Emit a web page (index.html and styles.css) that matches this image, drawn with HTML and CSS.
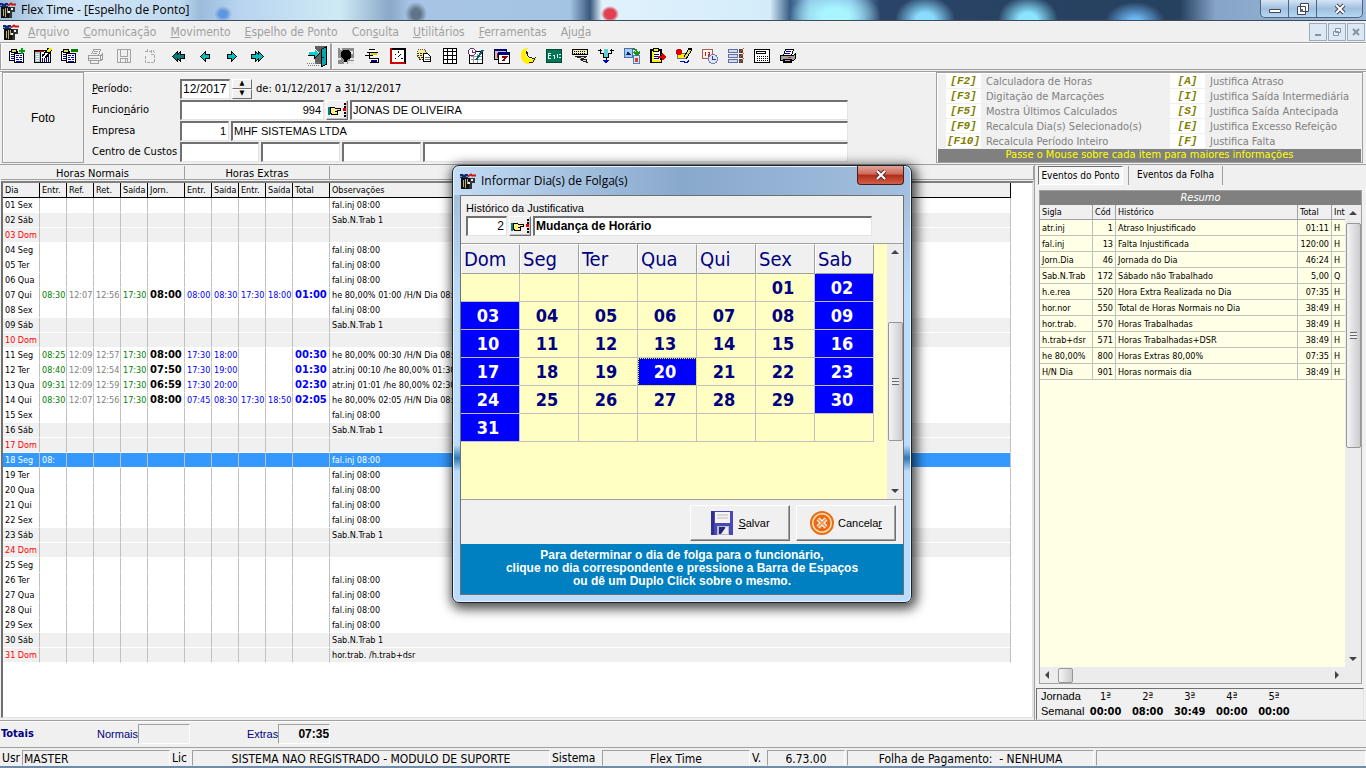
FILE: index.html
```html
<!DOCTYPE html>
<html lang="pt-BR">
<head>
  <meta charset="UTF-8" />
  <title>Flex Time - [Espelho de Ponto]</title>
  <link rel="stylesheet" href="styles.css">
</head>
<body>
  <!-- icons -->
  <svg class="sprite" xmlns="http://www.w3.org/2000/svg">
    <symbol id="i-app" viewBox="0 0 16 16"><path d="M0 1h8v4H0z" fill="#112a6b"/><path d="M0 3.500h2M3 1.500h2M6 3.500h2" stroke="#6f93d8"/><path d="M8 3.500l3-2 1 1h4" stroke="#d01818" fill="none" stroke-width="2"/><path d="M1 5h9v11H1z" fill="#111"/><path d="M3.500 7v7M5.500 6v9M7.500 6v5" stroke="#b8b070"/><path d="M10 5h5v5h-3v6h-3z" fill="#333"/><path d="M11 6h2v2h-2zM8 9h2v2H8z" fill="#eee"/></symbol>
    <symbol id="i-new" viewBox="0 0 17 16"><path d="M.500 3.500h8v9h-8z" fill="#fff" stroke="#000"/><path d="M3 1h5v3H3z" fill="#d8d878" stroke="#000"/><path d="M5.500 5.500h9v9h-9z" fill="#fff" stroke="#000"/><path d="M2 6.500h3M2 8.500h3M2 10.500h3M7 7.500h3M11 7.500h2M7 9.500h2M10 9.500h3M7 11.500h3M11 11.500h2M7 13.500h6" stroke="#0000b0"/><path d="M13 0v6M10 3h6" stroke="#00a000" stroke-width="2"/></symbol>
    <symbol id="i-edit" viewBox="0 0 18 16"><path d="M.500 2.500h16v12H.500z" fill="#fff" stroke="#000"/><path d="M1 3h5v11H1z" fill="#a8c8c8"/><path d="M6.500 3v11" stroke="#000"/><path d="M1 3.500h9" stroke="#c00000"/><path d="M2 6.500h3M2 8.500h3M2 10.500h3M2 12.500h3" stroke="#fff"/><path d="M8.500 6v8M10.500 6v8M12.500 8v6M14.500 6v8" stroke="#000080"/><path d="M17 0l-7 9" stroke="#000" stroke-width="5"/><path d="M17 0l-3 4" stroke="#f4f000" stroke-width="3"/><path d="M13 5l-4 5" stroke="#fff" stroke-width="2"/></symbol>
    <symbol id="i-del" viewBox="0 0 17 16"><path d="M.500 3.500h8v9h-8z" fill="#fff" stroke="#000"/><path d="M3 1h5v3H3z" fill="#d8d878" stroke="#000"/><path d="M5.500 5.500h9v9h-9z" fill="#fff" stroke="#000"/><path d="M2 6.500h3M2 8.500h3M2 10.500h3M7 7.500h3M11 7.500h2M7 9.500h2M10 9.500h3M7 11.500h3M11 11.500h2M7 13.500h6" stroke="#0000b0"/><path d="M10 1h7v3h-7z" fill="#008000"/></symbol>
    <symbol id="i-print-off" viewBox="0 0 16 16"><g fill="none" stroke="#9c9c9c"><path d="M4.500 6.500l2-5h7l-2 6M7 3.500h4M6 5.500h4M1.500 7.500h12v5h-12zM13.500 8l2-2v5l-2 2M2 10.500h10M3.500 13v2h8v-2"/></g></symbol>
    <symbol id="i-save-off" viewBox="0 0 16 16"><g fill="none" stroke="#a4a4a4"><path d="M1.500 1.500h13v13h-13zM4.500 2v6h7V2M4.500 14v-4h7v4M9.500 11v3"/></g></symbol>
    <symbol id="i-undo-off" viewBox="0 0 16 16"><g fill="none" stroke="#a8a8a8"><path d="M3.500 8v6.500h9V6.500h-3v-4h2l1 3M5.500 1v4M3 3.500h6" stroke-dasharray="3 1"/></g></symbol>
    <symbol id="i-first" viewBox="0 0 16 16"><path d="M1.500 8.500l5-5v3l3-3v3h4v4h-4v3l-3-3v3z" fill="#008080" stroke="#000"/></symbol>
    <symbol id="i-prev" viewBox="0 0 16 16"><path d="M3.500 8.500l5-5v3h4v4h-4v3z" fill="#00c0c0" stroke="#000"/></symbol>
    <symbol id="i-next" viewBox="0 0 16 16"><path d="M13.500 8.500l-5-5v3h-4v4h4v3z" fill="#00c0c0" stroke="#000"/></symbol>
    <symbol id="i-last" viewBox="0 0 16 16"><path d="M14.500 8.500l-5-5v3l-3-3v3h-4v4h4v3l3-3v3z" fill="#00c0c0" stroke="#000"/></symbol>
    <symbol id="i-exit" viewBox="0 0 22 22"><path d="M8 1h11v18H8z" fill="#606060"/><path d="M0 18.500h9M1 20.500h12M9 17.500h4" stroke="#808080" stroke-dasharray="1 1"/><path d="M14.500 4.500l5-3v18l-5 2z" fill="#00a8b0" stroke="#000"/><path d="M15 12.500h2" stroke="#000"/><path d="M1.500 6.500h6v-3l5 5-5 5v-3h-6z" fill="#00d0d0" stroke="#fff"/><path d="M1 10.500h6.500v3l5-5" fill="none" stroke="#000"/></symbol>
    <symbol id="i-face" viewBox="0 0 16 16"><path d="M0 0h16v16H0z" fill="#8c8c8c"/><path d="M2 0h2v2H2zM12 3h3v3h-3zM0 10h3v2H0zM12 10h4v2h-4zM10 13h6v3h-6zM6 14h3v2H6z" fill="#e6e6e6"/><path d="M5 2h6l2 3v5l-3 1-1 3H6v-3L3 9V5z" fill="#000"/></symbol>
    <symbol id="i-tree" viewBox="0 0 16 16"><path d="M5 1h7v3H5zM2 6h9v2H2zM6 10h8v4H6z" fill="#fff"/><path d="M5 1.500h6M3 4.500h11M1 7.500h8M5 10.500h9M6 14.500h9M14.500 10v4M5.500 5v6" stroke="#000"/><path d="M7 5h6v2H7z" fill="#d8d000"/><path d="M7 12.500h6" stroke="#000080" stroke-width="2"/></symbol>
    <symbol id="i-clock" viewBox="0 0 14 14"><path d="M1 1h12v12H1z" fill="#fff" stroke="#000" stroke-width="2"/><path d="M1 0v13h12" fill="none" stroke="#d00000" stroke-width="2"/><path d="M7.500 3v1M4.500 5v1M4.500 9v1M10.500 9v1M7 8l3-3" stroke="#000"/></symbol>
    <symbol id="i-docs" viewBox="0 0 16 16"><path d="M2 2l6-1 3 4-5 8-5-5z" fill="#f4ec90" stroke="#555" stroke-dasharray="1 1"/><path d="M1 5.500h6M1 7.500h6M2 9.500h5M3 11.500h4" stroke="#333" stroke-dasharray="2 1"/><path d="M7.500 5.500h4l3 3v5h-7z" fill="#fff" stroke="#000"/><path d="M9 9.500h5M9 11.500h5" stroke="#777"/></symbol>
    <symbol id="i-grid" viewBox="0 0 14 16"><path d="M.500.500h13v15H.500zM4.500 0v16M9.500 0v16M0 3.500h14M0 7.500h14M0 11.500h14" fill="#fff" stroke="#000"/></symbol>
    <symbol id="i-plan" viewBox="0 0 16 16"><path d="M1.500 3.500h13v12h-13z" fill="#fff" stroke="#000"/><path d="M3 8.500h11M3 11.500h11M5.500 6v9M9.500 6v9" stroke="#999"/><circle cx="4" cy="4" r="3.500" fill="#fff" stroke="#603070"/><path d="M4.500 2v2.500h2" stroke="#603070" fill="none"/><path d="M15 2L8 12" stroke="#006070" fill="none" stroke-width="2"/></symbol>
    <symbol id="i-cal" viewBox="0 0 16 16"><path d="M.500 1.500h12v10H.500z" fill="#c0c0d8" stroke="#000"/><path d="M1 1h12v2H1z" fill="#000080"/><path d="M3.500 5v5" stroke="#c00000"/><path d="M4.500 4.500h11v11h-11z" fill="#fff" stroke="#000"/><path d="M5 4h10v3H5z" fill="#000080"/><path d="M8 9h4l-3 4" stroke="#900000" fill="none" stroke-width="2"/></symbol>
    <symbol id="i-moon" viewBox="0 0 16 16"><path d="M6 0C-1 2-1 12 5 15c4 2 9 0 11-4-4 1-8 0-9-3C5 5 6 2 8 0z" fill="#fff000"/><path d="M7 3c-1 5 3 8 8 7l-2 4-4 1" stroke="#222" fill="none"/></symbol>
    <symbol id="i-exec" viewBox="0 0 16 16"><path d="M.500 1.500h15v13H.500z" fill="#007858" stroke="#004830"/><path d="M2 5.500h3M2.500 5v5M2 7.500h3M2 10.500h3M7 7.500h1.500v3M11.500 6v4M13 6.500h2M13 9.500h2" stroke="#e8f4ee" fill="none"/></symbol>
    <symbol id="i-keys" viewBox="0 0 16 16"><path d="M.500 1.500h15v5H.500z" fill="#f0ecb0" stroke="#000"/><path d="M2 3.500h12M2 5.500h12" stroke="#000" stroke-dasharray="1 1"/><path d="M3 8.500h12l-4 2-4-1zM8 11.500h6l1 3-5-2z" fill="#ddd" stroke="#222"/></symbol>
    <symbol id="i-split" viewBox="0 0 16 16"><path d="M6 1h4v9H6z" fill="#60d0d8"/><path d="M2.500 1v4.500h3v4h5v-4h3V1M0 2.500h4M12 2.500h4M8 10v3" stroke="#000" fill="none"/><path d="M5 12h6l-3 4z" fill="#0000c0"/></symbol>
    <symbol id="i-copy" viewBox="0 0 16 16"><path d="M.500.500h8v9h-8z" fill="#a8ccf0" stroke="#4470b0"/><path d="M2 7l2-4 3 4z" fill="#00287c"/><path d="M9.500 7.500h6v8h-6z" fill="#d8e8f8" stroke="#5080c0"/><circle cx="12.500" cy="12" r="2" fill="#e04030"/><path d="M9 1c3 0 4 1 4 4M10 4l3 3 3-3" stroke="#209020" fill="none" stroke-width="2"/></symbol>
    <symbol id="i-clip" viewBox="0 0 16 16"><path d="M1 2h10v12H1z" fill="#fff" stroke="#000" stroke-width="2"/><path d="M2.500 3v10h8" stroke="#fff000" fill="none" stroke-width="2"/><path d="M3.500.500h5v3h-5z" fill="#fff000" stroke="#000"/><path d="M4 6.500h5M4 8.500h4M4 10.500h5" stroke="#000090"/><path d="M8 9h6M12 6l3 3-3 3" stroke="#e00000" fill="none" stroke-width="2"/></symbol>
    <symbol id="i-paint" viewBox="0 0 16 16"><path d="M1.500 5.500h8v5h-8z" fill="#fff000" stroke="#777"/><circle cx="3" cy="4" r="3" fill="#d80000"/><path d="M15 0L9 10" stroke="#000" stroke-width="4"/><path d="M14 2L9 10" stroke="#e0e060" stroke-width="2"/><path d="M4 13.500h4v1h3l2-2" stroke="#0000d0" fill="none"/></symbol>
    <symbol id="i-time" viewBox="0 0 16 16"><path d="M.500 1.500h10v9H.500z" fill="#fff4ec" stroke="#a06050"/><path d="M3.500 4v4M5.500 4.500h2v1.500h-1.500v2h2" stroke="#c02020" fill="none"/><circle cx="11" cy="11" r="4.500" fill="#dce4f8" stroke="#7080b0"/><path d="M10.500 8v3.500h3" stroke="#304080" fill="none"/></symbol>
    <symbol id="i-checks" viewBox="0 0 16 16"><path d="M.500 1.500h9v3H.500zM.500 6.500h9v3H.500zM.500 11.500h9v3H.500z" fill="#d4dcf0" stroke="#6070a0"/><path d="M11 1h4v4h-4zM11 6h4v4h-4zM11 11h4v4h-4z" fill="#444"/><path d="M12 4l4-4M12 9l4-4M12 14l4-4" stroke="#e05020"/></symbol>
    <symbol id="i-calc" viewBox="0 0 16 14"><path d="M.500.500h15v13H.500z" fill="#fff" stroke="#000"/><path d="M2.500 2.500h9v2h-9z" fill="none" stroke="#000"/><path d="M3 7.500h11M3 9.500h11M3 11.500h11" stroke="#000" stroke-dasharray="1 1"/></symbol>
    <symbol id="i-print" viewBox="0 0 16 14"><path d="M5.500.500h8l-2 6h-8z" fill="#fff" stroke="#000"/><path d="M6 2.500h5M5 4.500h5" stroke="#0000b0"/><path d="M.500 6.500h13l2-2v5l-2 2H.500z" fill="#a0a0a0" stroke="#000"/><path d="M3 10h9v4H3z" fill="#000"/><path d="M5 11.500h5" stroke="#aaa"/><path d="M8 8.500h3" stroke="#e02020"/></symbol>
    <symbol id="i-hand" viewBox="0 0 18 14"><path d="M0 4h2v8H0z" fill="#008080"/><path d="M2.500 4.500h4l1 1h5v2h-3v4h-5l-2-1z" fill="#fff080" stroke="#000"/><path d="M7 8.500h3" stroke="#000"/><path d="M16.500 0v14" stroke="#000" stroke-width="2" stroke-dasharray="2 1"/><path d="M15 5h3v3h-3z" fill="#e00000"/></symbol>
    <symbol id="i-floppy" viewBox="0 0 24 24"><path d="M1 0h22v24H3l-2-2z" fill="#4a48b8"/><path d="M1 0h3v24H1z" fill="#302e90"/><path d="M5 1h15v11H5z" fill="#f4f4f4"/><path d="M7 4h11M7 7h11" stroke="#bbb"/><path d="M7 15h12v9H7z" fill="#b8bccc"/><path d="M9 16h6v7H9z" fill="#26247c"/><path d="M11 23l5-7h2v7z" fill="#eee"/></symbol>
    <symbol id="i-cancel" viewBox="0 0 24 24"><circle cx="12" cy="12" r="11" fill="#fbe4c8" stroke="#e87010" stroke-width="2"/><circle cx="12" cy="12" r="8.500" fill="#ee6a10"/><path d="M8 8l8 8M16 8l-8 8" stroke="#fff" stroke-width="4"/><path d="M8 8l8 8M16 8l-8 8" stroke="#f0a060" stroke-width="2"/></symbol>
  </svg>

  <header class="titlebar">
    <svg class="icon"><use href="#i-app"/></svg>
    <h1>Flex Time - [Espelho de Ponto]</h1>
    <div class="win-buttons">
      <button aria-label="Minimizar"><svg viewBox="0 0 14 12"><path d="M1.500 6.500h11v3h-11z" fill="#fff" stroke="#445"/></svg></button>
      <button aria-label="Restaurar"><svg viewBox="0 0 14 12"><path d="M4.500.500h8v8h-8zM1.500 3.500h8v8h-8z" fill="#fff" stroke="#445"/><path d="M4 6h3v3H4z" fill="#567"/></svg></button>
      <button class="close" aria-label="Fechar"><svg viewBox="0 0 14 12"><path d="M3 2l8 8M11 2l-8 8" stroke="#445" stroke-width="4"/><path d="M3 2l8 8M11 2l-8 8" stroke="#fff" stroke-width="2"/></svg></button>
    </div>
  </header>

  <nav class="menubar">
    <svg class="icon"><use href="#i-app"/></svg>
    <button disabled><u>A</u>rquivo</button>
    <button disabled><u>C</u>omunicação</button>
    <button disabled><u>M</u>ovimento</button>
    <button disabled><u>E</u>spelho de Ponto</button>
    <button disabled>Con<u>s</u>ulta</button>
    <button disabled><u>U</u>tilitários</button>
    <button disabled><u>F</u>erramentas</button>
    <button disabled>Aju<u>d</u>a</button>
    <div class="mdi-buttons">
      <button aria-label="Minimizar"><svg viewBox="0 0 10 10"><path d="M2 7h6v2H2z" fill="#8494a4"/></svg></button>
      <button aria-label="Restaurar"><svg viewBox="0 0 10 10"><path d="M3.500 1.500h5v4h-5zM1.500 4.500h5v4h-5z" fill="#eef" stroke="#8494a4"/></svg></button>
      <button aria-label="Fechar"><svg viewBox="0 0 10 10"><path d="M2 2l6 6M8 2L2 8" stroke="#8494a4" stroke-width="2"/></svg></button>
    </div>
  </nav>

  <div class="toolbars">
    <div class="toolbar files">
      <button aria-label="Incluir"><svg class="wide"><use href="#i-new"/></svg></button>
      <button aria-label="Alterar"><svg class="wide"><use href="#i-edit"/></svg></button>
      <button aria-label="Excluir"><svg class="wide"><use href="#i-del"/></svg></button>
      <button aria-label="Imprimir" disabled><svg><use href="#i-print-off"/></svg></button>
      <span class="sep"></span>
      <button aria-label="Gravar" disabled><svg><use href="#i-save-off"/></svg></button>
      <button aria-label="Desfazer" disabled><svg><use href="#i-undo-off"/></svg></button>
      <span class="sep"></span>
      <button aria-label="Primeiro"><svg><use href="#i-first"/></svg></button>
      <button aria-label="Anterior"><svg><use href="#i-prev"/></svg></button>
      <button aria-label="Próximo"><svg><use href="#i-next"/></svg></button>
      <button aria-label="Último"><svg><use href="#i-last"/></svg></button>
      <button class="exit" aria-label="Sair"><svg><use href="#i-exit"/></svg></button>
    </div>
    <div class="toolbar tools">
      <button aria-label="Funcionários"><svg><use href="#i-face"/></svg></button>
      <button aria-label="Departamentos"><svg><use href="#i-tree"/></svg></button>
      <button aria-label="Horários"><svg><use href="#i-clock"/></svg></button>
      <button aria-label="Justificativas"><svg><use href="#i-docs"/></svg></button>
      <button aria-label="Tabela"><svg><use href="#i-grid"/></svg></button>
      <button aria-label="Escala"><svg><use href="#i-plan"/></svg></button>
      <button aria-label="Feriados"><svg><use href="#i-cal"/></svg></button>
      <button aria-label="Noturno"><svg><use href="#i-moon"/></svg></button>
      <button aria-label="Eventos"><svg><use href="#i-exec"/></svg></button>
      <button aria-label="Digitação"><svg><use href="#i-keys"/></svg></button>
      <button aria-label="Apuração"><svg><use href="#i-split"/></svg></button>
      <button aria-label="Exportar"><svg><use href="#i-copy"/></svg></button>
      <button aria-label="Lançamentos"><svg><use href="#i-clip"/></svg></button>
      <button aria-label="Ocorrências"><svg><use href="#i-paint"/></svg></button>
      <button aria-label="Banco de horas"><svg><use href="#i-time"/></svg></button>
      <button aria-label="Conferência"><svg><use href="#i-checks"/></svg></button>
      <button aria-label="Calculadora"><svg><use href="#i-calc"/></svg></button>
      <button aria-label="Relatórios"><svg><use href="#i-print"/></svg></button>
    </div>
  </div>

  <section class="head">
    <div class="photo">Foto</div>
    <form class="fields">
      <div class="row">
        <label for="periodo"><u>P</u>eríodo:</label>
        <input id="periodo" class="w-period" value="12/2017">
        <span class="spin"><button type="button" aria-label="Mais">▲</button><button type="button" aria-label="Menos">▼</button></span>
        <span class="range">de: 01/12/2017 a 31/12/2017</span>
      </div>
      <div class="row">
        <label for="func">Funcio<u>n</u>ário</label>
        <input id="func" class="w-func num" value="994">
        <button type="button" class="lookup" aria-label="Localizar"><svg><use href="#i-hand"/></svg></button>
        <input class="grow" aria-label="Nome do funcionário" value="JONAS DE OLIVEIRA">
      </div>
      <div class="row">
        <label for="emp">Empresa</label>
        <input id="emp" class="w-emp num" value="1">
        <input class="grow" aria-label="Nome da empresa" value="MHF SISTEMAS LTDA">
      </div>
      <div class="row">
        <label for="cc">Centro de Custos</label>
        <input id="cc" class="w-cc">
        <input class="w-cc" aria-label="Centro de custos 2">
        <input class="w-cc" aria-label="Centro de custos 3">
        <input class="grow" aria-label="Descrição do centro de custos">
      </div>
    </form>
    <aside class="help">
      <dl>
        <dt>[F2]</dt><dd>Calculadora de Horas</dd><dt>[A]</dt><dd>Justifica Atraso</dd>
        <dt>[F3]</dt><dd>Digitação de Marcações</dd><dt>[I]</dt><dd>Justifica Saída Intermediária</dd>
        <dt>[F5]</dt><dd>Mostra Últimos Calculados</dd><dt>[S]</dt><dd>Justifica Saída Antecipada</dd>
        <dt>[F9]</dt><dd>Recalcula Dia(s) Selecionado(s)</dd><dt>[E]</dt><dd>Justifica Excesso Refeição</dd>
        <dt>[F10]</dt><dd>Recalcula Período Inteiro</dd><dt>[F]</dt><dd>Justifica Falta</dd>
      </dl>
      <p>Passe o Mouse sobre cada item para maiores informações</p>
    </aside>
  </section>

  <main>
    <section class="sheet">
      <div class="groups"><span class="g-normal">Horas Normais</span><span class="g-extra">Horas Extras</span><span class="g-rest"></span></div>
      <div class="sheet-body">
        <table class="days">
          <colgroup><col class="c-dia"><col><col><col><col><col class="c-jorn"><col><col><col><col><col class="c-jorn"><col class="c-obs"></colgroup>
          <thead>
            <tr><th>Dia</th><th>Entr.</th><th>Ref.</th><th>Ret.</th><th>Saída</th><th>Jorn.</th><th>Entr.</th><th>Saída</th><th>Entr.</th><th>Saída</th><th>Total</th><th>Observações</th></tr>
          </thead>
          <tbody id="days"></tbody>
        </table>
      </div>
    </section>

    <section class="side">
      <div class="tabs">
        <button class="active">Eventos do Ponto</button>
        <button>Eventos da Folha</button>
      </div>
      <div class="summary">
        <h2>Resumo</h2>
        <div class="summary-body">
          <div class="events-wrap">
            <table class="events">
              <colgroup><col class="e-sigla"><col class="e-cod"><col><col class="e-total"><col class="e-int"></colgroup>
              <thead><tr><th>Sigla</th><th>Cód</th><th>Histórico</th><th>Total</th><th>Int</th></tr></thead>
              <tbody>
                <tr><td>atr.inj</td><td>1</td><td>Atraso Injustificado</td><td>01:11</td><td>H</td></tr>
                <tr><td>fal.inj</td><td>13</td><td>Falta Injustificada</td><td>120:00</td><td>H</td></tr>
                <tr><td>Jorn.Dia</td><td>46</td><td>Jornada do Dia</td><td>46:24</td><td>H</td></tr>
                <tr><td>Sab.N.Trab</td><td>172</td><td>Sábado não Trabalhado</td><td>5,00</td><td>Q</td></tr>
                <tr><td>h.e.rea</td><td>520</td><td>Hora Extra Realizada no Dia</td><td>07:35</td><td>H</td></tr>
                <tr><td>hor.nor</td><td>550</td><td>Total de Horas Normais no Dia</td><td>38:49</td><td>H</td></tr>
                <tr><td>hor.trab.</td><td>570</td><td>Horas Trabalhadas</td><td>38:49</td><td>H</td></tr>
                <tr><td>h.trab+dsr</td><td>571</td><td>Horas Trabalhadas+DSR</td><td>38:49</td><td>H</td></tr>
                <tr><td>he 80,00%</td><td>800</td><td>Horas Extras 80,00%</td><td>07:35</td><td>H</td></tr>
                <tr><td>H/N Dia</td><td>901</td><td>Horas normais dia</td><td>38:49</td><td>H</td></tr>
              </tbody>
            </table>
          </div>
          <div class="vscroll"><i class="arrow up"></i><i class="thumb"></i><i class="arrow down"></i></div>
        </div>
        <div class="hscroll"><i class="arrow left"></i><i class="thumb"></i><i class="arrow right"></i></div>
      </div>
      <table class="week">
        <tr><th>Jornada</th><td>1ª</td><td>2ª</td><td>3ª</td><td>4ª</td><td>5ª</td></tr>
        <tr class="b"><th>Semanal</th><td>00:00</td><td>08:00</td><td>30:49</td><td>00:00</td><td>00:00</td></tr>
      </table>
    </section>
  </main>

  <section class="totals">
    <b>Totais</b>
    <label for="tn">Normais</label><input id="tn" readonly>
    <label for="te">Extras</label><input id="te" readonly value="07:35">
  </section>

  <footer class="status">
    <span class="s-short">Usr</span><span class="cell usr">MASTER</span>
    <span class="s-short">Lic</span><span class="cell lic">SISTEMA NAO REGISTRADO - MODULO DE SUPORTE</span>
    <span class="s-sis">Sistema</span><span class="cell sis">Flex Time</span>
    <span class="s-ver">V.</span><span class="cell ver">6.73.00</span>
    <span class="cell folha">Folha de Pagamento: &nbsp;- NENHUMA</span>
    <span class="cell rest"></span>
  </footer>

  <div class="overlay">
    <div class="dialog" role="dialog" aria-labelledby="dlg-title">
      <div class="dlg-title">
        <svg class="icon"><use href="#i-app"/></svg>
        <h2 id="dlg-title">Informar Dia(s) de Folga(s)</h2>
        <button class="dlg-close" aria-label="Fechar"><svg viewBox="0 0 14 12"><path d="M3 2l8 8M11 2l-8 8" stroke="#533" stroke-width="4"/><path d="M3 2l8 8M11 2l-8 8" stroke="#fff" stroke-width="2"/></svg></button>
      </div>
      <div class="dlg-body">
        <div class="hist">
          <label for="hist">Histórico da Justificativa</label>
          <div class="row">
            <input id="hist" class="num" value="2">
            <button class="lookup" aria-label="Localizar"><svg><use href="#i-hand"/></svg></button>
            <input class="grow" aria-label="Descrição" value="Mudança de Horário">
          </div>
        </div>
        <div class="cal-wrap">
          <div class="cal-area">
            <table class="cal">
              <thead><tr><th>Dom</th><th>Seg</th><th>Ter</th><th>Qua</th><th>Qui</th><th>Sex</th><th>Sab</th></tr></thead>
              <tbody>
                <tr><td></td><td></td><td></td><td></td><td></td><td>01</td><td class="off">02</td></tr>
                <tr><td class="off">03</td><td>04</td><td>05</td><td>06</td><td>07</td><td>08</td><td class="off">09</td></tr>
                <tr><td class="off">10</td><td>11</td><td>12</td><td>13</td><td>14</td><td>15</td><td class="off">16</td></tr>
                <tr><td class="off">17</td><td>18</td><td>19</td><td class="off focus">20</td><td>21</td><td>22</td><td class="off">23</td></tr>
                <tr><td class="off">24</td><td>25</td><td>26</td><td>27</td><td>28</td><td>29</td><td class="off">30</td></tr>
                <tr><td class="off">31</td><td></td><td></td><td></td><td></td><td></td><td></td></tr>
              </tbody>
            </table>
          </div>
          <div class="vscroll"><i class="arrow up"></i><i class="thumb"></i><i class="arrow down"></i></div>
        </div>
        <div class="actions">
          <button><svg><use href="#i-floppy"/></svg><span><u>S</u>alvar</span></button>
          <button><svg><use href="#i-cancel"/></svg><span>Cancela<u>r</u></span></button>
        </div>
        <p class="hint">Para determinar o dia de folga para o funcionário,<br>clique no dia correspondente e pressione a Barra de Espaços<br>ou dê um Duplo Click sobre o mesmo.</p>
      </div>
    </div>
  </div>

  <script>
    const semana = ['Dom', 'Seg', 'Ter', 'Qua', 'Qui', 'Sex', 'Sáb'];

    // entr, ref, ret, saida, jorn, entr, saida, entr, saida, total
    const marcacoes = {
      7: ['08:30', '12:07', '12:56', '17:30', '08:00', '08:00', '08:30', '17:30', '18:00', '01:00'],
      11: ['08:25', '12:09', '12:57', '17:30', '08:00', '17:30', '18:00', '', '', '00:30'],
      12: ['08:40', '12:09', '12:54', '17:30', '07:50', '17:30', '19:00', '', '', '01:30'],
      13: ['09:31', '12:09', '12:59', '17:30', '06:59', '17:30', '20:00', '', '', '02:30'],
      14: ['08:30', '12:07', '12:56', '17:30', '08:00', '07:45', '08:30', '17:30', '18:50', '02:05'],
      18: ['08:', '', '', '', '', '', '', '', '', '']
    };
    const obs = {
      7: 'he 80,00% 01:00 /H/N Dia 08:00',
      11: 'he 80,00% 00:30 /H/N Dia 08:00',
      12: 'atr.inj 00:10 /he 80,00% 01:30',
      13: 'atr.inj 01:01 /he 80,00% 02:30',
      14: 'he 80,00% 02:05 /H/N Dia 08:00',
      25: '',
      31: 'hor.trab. /h.trab+dsr'
    };

    let html = '';
    for (let d = 1; d <= 31; d++) {
      const w = (d + 4) % 7;
      const cls = d === 18 ? 'sel' : w === 0 ? 'dom' : w === 6 ? 'sab' : '';
      const texto = d in obs ? obs[d] : w === 0 ? '' : w === 6 ? 'Sab.N.Trab 1' : 'fal.inj 08:00';
      const horas = marcacoes[d] || Array(10).fill('');
      html += `<tr class="${cls}"><td>${String(d).padStart(2, '0')} ${semana[w]}</td>` +
        horas.map(h => `<td>${h}</td>`).join('') + `<td>${texto}</td></tr>`;
    }
    document.getElementById('days').innerHTML = html;
  </script>
</body>
</html>
```

FILE: styles.css
```css
* { box-sizing: border-box; }
body { margin: 0; height: 100vh; min-width: 1200px; overflow: hidden; display: flex; flex-direction: column; background: #f0f0f0; color: #000; font: 11px/14px "DejaVu Sans Condensed", "DejaVu Sans", sans-serif; border-bottom: 2px solid #6f8ba8; }
h1, h2, p, dl, dd { margin: 0; font-weight: normal; }
button, input { font: inherit; color: inherit; padding: 0; border-radius: 0; }
button { background: none; border: none; }
table { border-collapse: separate; border-spacing: 0; table-layout: fixed; }
th, td { padding: 0; font-weight: normal; text-align: left; white-space: nowrap; overflow: hidden; }
.sprite { position: absolute; width: 0; height: 0; }
.icon { width: 16px; height: 16px; flex: none; }
.num { text-align: right; }
.grow { flex: 1; min-width: 0; }

/* title bar */
.titlebar { height: 21px; flex: none; display: flex; align-items: center; gap: 5px; border-bottom: 1px solid #3c4c60;
  background:
    radial-gradient(ellipse 9px 8px at 223px 14px, #5f94e0 40%, transparent),
    radial-gradient(ellipse 9px 8px at 610px 14px, #e04050 60%, transparent),
    radial-gradient(ellipse 11px 12px at 416px 14px, #5f7488 40%, transparent),
    radial-gradient(ellipse 46px 26px at 835px 16px, #a8f4ff 30%, transparent),
    radial-gradient(ellipse 30px 24px at 925px 20px, #8adcff 30%, transparent),
    radial-gradient(ellipse 30px 24px at 1028px 20px, #8ae4ff 30%, transparent),
    radial-gradient(ellipse 30px 20px at 1135px 22px, #6cb8f4 20%, transparent),
    linear-gradient(90deg, #9dbbd9 0, #d4e8f8 60px, #c0daf0 180px, #9cbcdc 200px, #b8d4f0 240px, #cfeaf4 340px, #8aa8c8 390px, #a8c4e4 410px, #a4c4e4 570px, #39587c 590px, #e0f2fc 602px, #d4ecfa 770px, #385c84 790px, #8cc0e4 810px, #80b0dc 850px, #2a4468 880px, #26405f 1180px, #86a4c8 1215px, #a0bcdc 1366px); }
.titlebar h1, .dlg-title h2 { flex: 1; font: 12px/16px "Open Sans", sans-serif; }
.win-buttons { display: flex; align-self: flex-start; width: 103px; height: 18px; margin-right: 3px; border: 1px solid #50647c; border-top: none; border-radius: 0 0 5px 5px; background: linear-gradient(#d4e4f4, #a0c0e0 50%, #b4d8f4); }
.win-buttons button { width: 28px; border-right: 1px solid #50647c; display: flex; align-items: center; justify-content: center; }
.win-buttons .close { flex: 1; border: none; }
.win-buttons svg, .dlg-close svg { width: 14px; height: 12px; }

/* menu */
.menubar { height: 22px; flex: none; display: flex; align-items: center; gap: 14px; padding-left: 3px; border-bottom: 1px solid #a0a0a0; font-size: 12px; }
.menubar > .icon { margin-right: -5px; }
.menubar > button { color: #a0a0a0; }
.mdi-buttons { margin-left: auto; display: flex; gap: 1px; padding-right: 1px; }
.mdi-buttons button { width: 18px; height: 18px; border: 1px solid #9aacbe; background: #dce8f4; display: flex; align-items: center; justify-content: center; }
.mdi-buttons svg { width: 10px; height: 10px; }

/* toolbars */
.toolbars { height: 27px; flex: none; display: flex; border-bottom: 1px solid #a0a0a0; }
.toolbar { display: flex; align-items: flex-start; border-left: 1px solid #a0a0a0; border-top: 1px solid #fff; box-shadow: inset 1px 0 #fff; }
.toolbar svg { width: 16px; height: 16px; display: block; margin: auto; shape-rendering: crispEdges; }
.toolbar .wide { width: 18px; }
.toolbar button { width: 26px; height: 24px; }
.files { width: 331px; padding-left: 3px; border-right: 1px solid #a0a0a0; }
.files .sep { width: 3px; }
.files .exit { margin-left: auto; width: 24px; }
.files .exit svg { width: 22px; height: 22px; }
.tools { flex: 1; padding-left: 1px; }

/* header */
.head { flex: none; display: flex; height: 94px; margin-top: 1px; border-top: 1px solid #a0a0a0; border-bottom: 1px solid #a0a0a0; box-shadow: inset 0 1px #fff; padding: 0 3px 0 2px; }
.photo { width: 82px; height: 91px; flex: none; display: flex; align-items: center; justify-content: center; border: 1px solid #a0a0a0; box-shadow: inset 1px 1px #fff; font-family: "Liberation Sans", sans-serif; font-size: 12px; }
.fields { flex: 1; padding: 6px 88px 0 8px; }
.fields label { width: 86px; flex: none; }
.fields .row { height: 21px; }
.row { display: flex; align-items: center; gap: 2px; }
.row input { height: 20px; padding: 0 2px 1px 1px; background: #fff; border: 2px solid; border-color: #707070 #e3e3e3 #e3e3e3 #707070; border-width: 2px 1px 1px 2px; font-family: "Liberation Sans", sans-serif; font-size: 11px; }
.row .w-period { width: 50px; font-size: 12px; }
.row .w-func { width: 144px; }
.row .w-emp { width: 49px; }
.row .w-cc { width: 79px; }
.spin { display: flex; flex-direction: column; width: 20px; margin-right: 2px; }
.spin button { height: 10px; border: 1px solid; border-color: #fff #707070 #707070 #fff; font-size: 7px; line-height: 7px; }
.lookup { width: 22px; height: 20px; flex: none; border: 1px solid; border-color: #fff #707070 #707070 #fff; box-shadow: inset -1px -1px #c0c0c0; }
.lookup svg { width: 18px; height: 14px; display: block; margin: auto; shape-rendering: crispEdges; }
.help { width: 427px; height: 91px; border: 1px solid #a0a0a0; padding: 1px 1px 0; box-shadow: inset 1px 1px #fff; }
.help dl { display: grid; grid-template-columns: 35px 179px 35px 1fr; grid-auto-rows: 15px; padding-left: 8px; column-gap: 5px; color: #808080; }
.help dt { height: 14px; background: #fff; color: #808000; font: italic bold 11px/14px "Liberation Mono", monospace; text-align: center; }
.help dd { line-height: 15px; }
.help p { height: 13px; background: #808080; color: #ff0; text-align: center; line-height: 12px; }

/* days grid */
main { flex: 1; min-height: 0; display: flex; }
.sheet { flex: 1; min-width: 0; display: flex; flex-direction: column; border-right: 1px solid #a0a0a0; }
.groups { display: flex; height: 16px; flex: none; padding: 1px 0 0 1px; }
.groups span { height: 14px; line-height: 16px; text-align: center; border-right: 1px solid #a0a0a0; border-bottom: 1px solid #a0a0a0; }
.g-normal { width: 184px; }
.g-extra { width: 145px; }
.g-rest { flex: 1; }
.sheet-body { flex: 1; margin: 0 0 2px 1px; padding-right: 21px; background: #fff; border: 2px solid; border-color: #808080 #e3e3e3 #e3e3e3 #707070; border-width: 2px 2px 1px 2px; }
.days { width: 100%; font-size: 9px; line-height: 14px; }
.days col { width: 27px; }
.days .c-dia, .days .c-jorn { width: 37px; }
.days .c-obs { width: auto; }
.days th { height: 15px; line-height: 14px; padding-left: 2px; background: #f0f0f0; border-right: 1px solid #000; border-bottom: 1px solid #000; }
.days td { height: 15px; padding-left: 2px; border-right: 1px solid #c0c0c0; border-bottom: 1px solid #fff; }
.days .sab td, .days .dom td { background: #f0f0f0; }
.days .dom td:first-child { color: #f00; }
.days td:nth-child(2), .days td:nth-child(5) { color: #008000; }
.days td:nth-child(3), .days td:nth-child(4) { color: #808080; }
.days td:nth-child(6), .days td:nth-child(11) { font: bold 10px/14px "DejaVu Sans", sans-serif; }
.days td:nth-child(n+7):nth-child(-n+11) { color: #00f; }
.days .sel td:nth-child(n) { background: #3399ff; color: #fff; }

/* side panel */
.side { width: 331px; flex: none; display: flex; flex-direction: column; }
.tabs { display: flex; height: 25px; flex: none; padding: 1px 0 5px 3px; gap: 5px; }
.tabs button { width: 95px; border-right: 1px solid #a0a0a0; font-size: 10px; padding-bottom: 2px; }
.tabs .active { width: 85px; padding: 0; background: #f8f8f8; border: 1px solid; border-color: #707070 #fff #fff #707070; }
.tabs .active + button { border-left: 1px solid #a0a0a0; }
.summary { flex: 1; min-height: 0; display: flex; flex-direction: column; margin: 0 4px 4px 4px; border: 1px solid #a0a0a0; }
.summary h2 { height: 14px; flex: none; background: #808080; color: #fff; text-align: center; font-size: 11px; font-style: italic; line-height: 14px; }
.summary-body { flex: 1; min-height: 0; display: flex; }
.events-wrap { flex: 1; background: #ffffe6; overflow: hidden; }
.events { width: 100%; font-size: 9px; line-height: 14px; }
.e-sigla { width: 53px; }
.e-cod { width: 23px; }
.e-total { width: 34px; }
.e-int { width: 13px; }
.events th { height: 15px; padding-left: 2px; background: #f0f0f0; border-right: 1px solid #a0a0a0; border-bottom: 1px solid #a0a0a0; }
.events td { height: 16px; padding: 0 2px; border-right: 1px solid #c0c0c0; border-bottom: 1px solid #c0c0c0; }
.events td:nth-child(2), .events td:nth-child(4) { text-align: right; }
.events td:last-child, .events th:last-child { border-right: none; padding-right: 0; }

/* scrollbars */
.vscroll { width: 16px; flex: none; display: flex; flex-direction: column; align-items: center; background: #ececec; padding: 6px 0; }
.hscroll { height: 16px; flex: none; display: flex; align-items: center; background: #ececec; padding: 0 22px 0 5px; }
.arrow { border: 4px solid transparent; }
.up { border-top: none; border-bottom-color: #444; }
.down { border-bottom: none; border-top-color: #444; margin-top: auto; }
.left { border-left: none; border-right-color: #444; }
.right { border-right: none; border-left-color: #444; margin-left: auto; }
.thumb { border: 1px solid #979797; border-radius: 2px; background: linear-gradient(90deg, #f4f4f4, #e0e0e0 50%, #ccccd0); }
.vscroll .thumb { width: 15px; height: 225px; margin-top: 8px; display: flex; align-items: center; justify-content: center; }
.vscroll .thumb::after { content: ""; width: 7px; height: 7px; background: repeating-linear-gradient(#666 0 1px, #eee 1px 3px); }
.hscroll .thumb { width: 15px; height: 15px; margin-left: 9px; }
.week { flex: none; width: 328px; margin-left: 1px; border: 1px solid; border-color: #707070 #e3e3e3 #e3e3e3 #707070; table-layout: auto; padding-right: 68px; }
.week th { width: 46px; height: 15px; padding-left: 4px; line-height: 15px; font-family: "Liberation Sans", sans-serif; font-size: 11px; }
.week td { width: 42px; text-align: center; line-height: 15px; }
.week .b td { font-weight: bold; }

/* totals and status */
.totals { height: 28px; flex: none; display: flex; align-items: center; padding-left: 1px; border-top: 1px solid #a0a0a0; border-bottom: 1px solid #a0a0a0; box-shadow: inset 0 1px #fff; color: #000080; font-family: "Liberation Sans", sans-serif; }
.totals b { width: 96px; font-family: "DejaVu Sans Condensed", sans-serif; }
.totals input { width: 52px; height: 20px; margin-right: 57px; background: #f0f0f0; border: 1px solid; border-color: #a0a0a0 #fff #fff #a0a0a0; color: #000; text-align: right; font-weight: bold; font-size: 12px; }
.status { height: 18px; flex: none; display: flex; align-items: flex-end; gap: 2px; padding-left: 2px; font-size: 12px; line-height: 16px; }
.status .s-short { width: 18px; }
.status .s-sis { width: 48px; }
.status .s-ver { width: 13px; }
.status .cell { height: 16px; text-align: center; border: 1px solid; border-color: #a0a0a0 #fff transparent #a0a0a0; white-space: nowrap; }
.status .usr { width: 148px; text-align: left; padding-left: 1px; }
.status .lic { width: 358px; }
.status .sis { width: 148px; }
.status .ver { width: 78px; }
.status .folha { width: 247px; }
.status .rest { flex: 1; }

/* dialog */
.overlay { position: absolute; inset: 0; padding-right: 2px; display: grid; place-items: center; }
.dialog { width: 460px; padding: 0 7px 7px; border: 1px solid #1c2630; border-radius: 7px; box-shadow: inset 0 0 0 1px #e8f4ff, 2px 3px 12px 3px rgba(0, 0, 0, .7); background: linear-gradient(90deg, #c4dcf4, #88a8cc 50%, #a4c0e0) top no-repeat, linear-gradient(#9fb8d4 0, #bcdcfc 30%, #bcdcfc 64%, #2f78b8 67%, #bcdcfc 70%); background-size: 100% 29px, 100% 100%; }
.dlg-title { height: 29px; display: flex; align-items: center; gap: 5px; }
.dlg-close { align-self: flex-start; width: 47px; height: 19px; border: 1px solid #4c1c1c; border-top: none; border-radius: 0 0 4px 4px; background: linear-gradient(#e0a498, #d06858 45%, #b02c18 50%, #d06048); display: flex; align-items: center; justify-content: center; }
.dlg-body { background: #f0f0f0; border: 1px solid #707070; }
.hist { height: 48px; padding: 5px 31px 0 5px; border-bottom: 1px solid #a0a0a0; font-family: "Liberation Sans", sans-serif; }
.hist label { display: block; line-height: 14px; }
.hist .row { height: 22px; }
.hist .num { width: 41px; font-size: 12px; }
.hist .grow { font-weight: bold; font-size: 12px; }
.cal-wrap { height: 256px; display: flex; border-bottom: 1px solid #a0a0a0; }
.cal-area { flex: 1; background: #ffffc4; }
.cal { width: 413px; color: #000080; }
.cal th { height: 30px; padding-left: 2px; font-size: 20px; line-height: 28px; background: #f0f0f0; border: 1px solid; border-color: #fff #a0a0a0 #a0a0a0 #fff; }
.cal td { height: 28px; padding-right: 4px; text-align: center; font-size: 18px; line-height: 26px; font-weight: bold; border-right: 1px solid #c0c0c0; border-bottom: 1px solid #c0c0c0; }
.cal .off { background: #00f; color: #fff; }
.cal .focus { outline: 1px dotted #ff0; outline-offset: -1px; }
.cal-wrap .vscroll .thumb { height: 119px; margin-top: 68px; }
.actions { height: 44px; padding: 5px 7px 0; display: flex; justify-content: flex-end; gap: 6px; font-family: "Liberation Sans", sans-serif; }
.actions button { width: 100px; height: 36px; display: flex; align-items: center; justify-content: center; gap: 4px; border: 1px solid; border-color: #fff #707070 #707070 #fff; box-shadow: inset -1px -1px #a0a0a0; }
.actions svg { width: 24px; height: 24px; }
.hint { height: 50px; padding-top: 5px; background: #0080c0; color: #fff; text-align: center; font: bold 12px/13px "Liberation Sans", sans-serif; }
```
